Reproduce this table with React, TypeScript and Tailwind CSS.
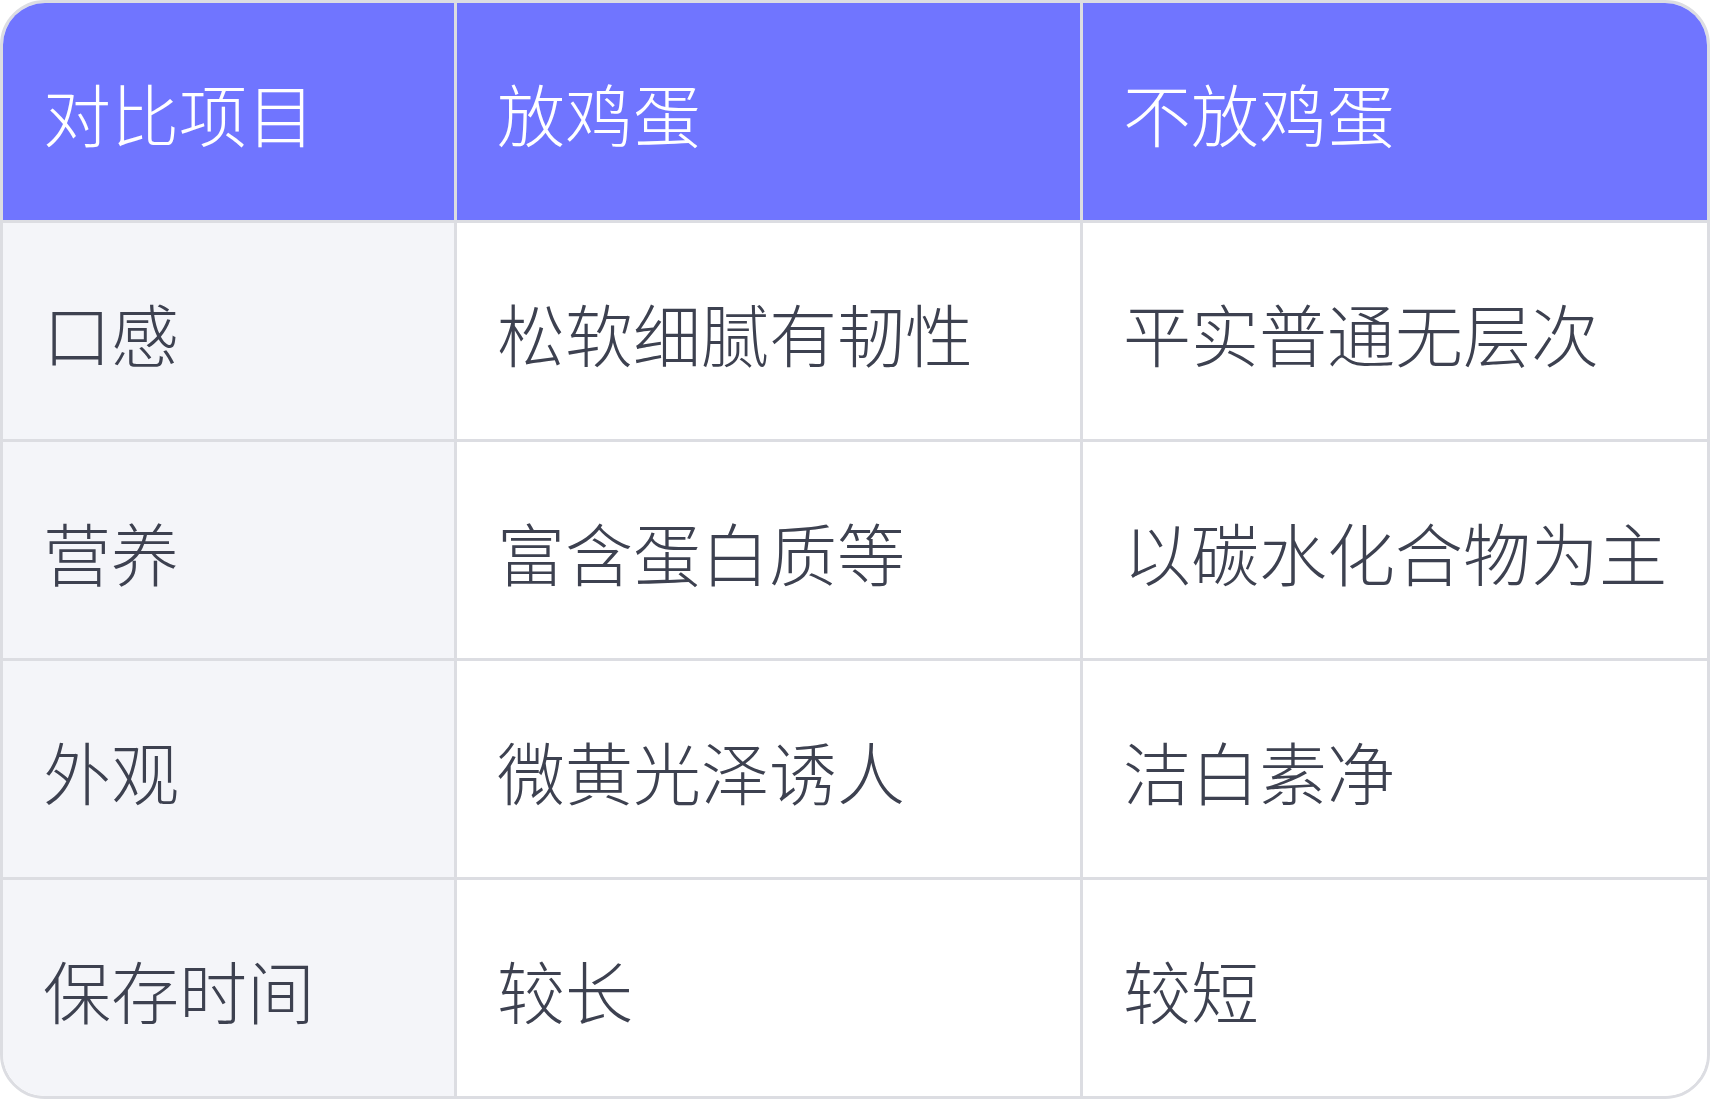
import React from "react";

const rows: [string, string, string][] = [
  ["口感", "松软细腻有韧性", "平实普通无层次"],
  ["营养", "富含蛋白质等", "以碳水化合物为主"],
  ["外观", "微黄光泽诱人", "洁白素净"],
  ["保存时间", "较长", "较短"],
];

export default function App() {
  return (
    <div
      className="w-[1710px] h-[1099px] bg-white"
      style={{ fontFamily: '"Noto Sans CJK SC", "Noto Sans", sans-serif' }}
    >
      <div className="w-full h-full border-[3px] border-[#dcdde2] rounded-[45px] overflow-hidden grid grid-cols-[454px_626px_1fr] grid-rows-[220px_219px_219px_219px_1fr]">
        {["对比项目", "放鸡蛋", "不放鸡蛋"].map((h, i) => (
          <div
            key={h}
            className={`flex items-center pl-[40px] pt-[2px] bg-[#7075ff] text-white text-[68px] font-light leading-none border-b-[3px] border-[#dcdde2] ${
              i < 2 ? "border-r-[3px]" : ""
            }`}
          >
            {h}
          </div>
        ))}
        {rows.map((r, ri) =>
          r.map((c, ci) => (
            <div
              key={`${ri}-${ci}`}
              className={`flex items-center pl-[40px] pt-[4px] text-[68px] font-light leading-none text-[#3d4150] border-[#dcdde2] ${
                ci === 0 ? "bg-[#f4f5f9]" : "bg-white"
              } ${ci < 2 ? "border-r-[3px]" : ""} ${ri < 3 ? "border-b-[3px]" : ""}`}
            >
              {c}
            </div>
          ))
        )}
      </div>
    </div>
  );
}
